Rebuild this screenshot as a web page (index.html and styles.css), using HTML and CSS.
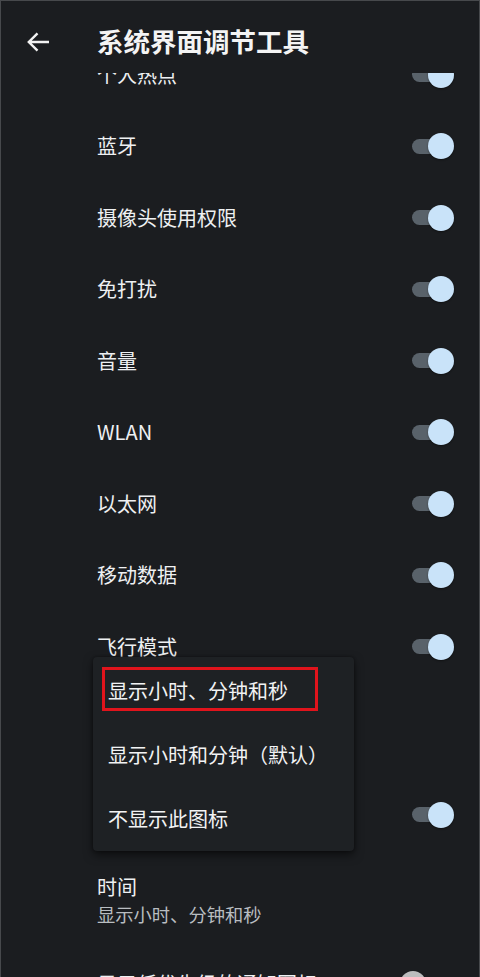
FILE: index.html
```html
<!DOCTYPE html>
<html lang="zh-CN">

<head>
    <meta charset="UTF-8">
    <meta name="viewport" content="width=device-width, initial-scale=1.0">
    <title>系统界面调节工具</title>
    <link rel="stylesheet" href="styles.css">
</head>

<body>

    <div class="screen">

        <div class="topbar">
            <svg class="back" width="24" height="24" viewBox="0 0 24 24">
                <path d="M23 12 H3 M11.5 3.3 L2.8 12 L11.5 20.7" fill="none" stroke="#f2f2f2" stroke-width="2.4" stroke-linecap="butt" stroke-linejoin="miter" />
            </svg>
            <div class="title">系统界面调节工具</div>
        </div>

        <div class="list">
            <div class="inner">

                <div class="row">
                    <span class="label">个人热点</span>
                    <span class="toggle on"><span class="track"></span><span class="thumb"></span></span>
                </div>
                <div class="row">
                    <span class="label">蓝牙</span>
                    <span class="toggle on"><span class="track"></span><span class="thumb"></span></span>
                </div>
                <div class="row">
                    <span class="label">摄像头使用权限</span>
                    <span class="toggle on"><span class="track"></span><span class="thumb"></span></span>
                </div>
                <div class="row">
                    <span class="label">免打扰</span>
                    <span class="toggle on"><span class="track"></span><span class="thumb"></span></span>
                </div>
                <div class="row">
                    <span class="label">音量</span>
                    <span class="toggle on"><span class="track"></span><span class="thumb"></span></span>
                </div>
                <div class="row">
                    <span class="label">WLAN</span>
                    <span class="toggle on"><span class="track"></span><span class="thumb"></span></span>
                </div>
                <div class="row">
                    <span class="label">以太网</span>
                    <span class="toggle on"><span class="track"></span><span class="thumb"></span></span>
                </div>
                <div class="row">
                    <span class="label">移动数据</span>
                    <span class="toggle on"><span class="track"></span><span class="thumb"></span></span>
                </div>
                <div class="row">
                    <span class="label">飞行模式</span>
                    <span class="toggle on"><span class="track"></span><span class="thumb"></span></span>
                </div>

                <div class="spacer"></div>

                <!-- label of this row sits under the popup -->
                <div class="row">
                    <span class="label"></span>
                    <span class="toggle on"><span class="track"></span><span class="thumb"></span></span>
                </div>

                <div class="row tall">
                    <div class="texts">
                        <div class="label">时间</div>
                        <div class="summary">显示小时、分钟和秒</div>
                    </div>
                </div>

                <div class="row">
                    <span class="label">显示低优先级的通知图标</span>
                    <span class="toggle off"><span class="track"></span><span class="thumb"></span></span>
                </div>

            </div>

            <!-- popup over the list -->
            <div class="menu">
                <div class="item">显示小时、分钟和秒<span class="mark"></span></div>
                <div class="item">显示小时和分钟（默认）</div>
                <div class="item">不显示此图标</div>
            </div>
        </div>

    </div>

</body>

</html>
```

FILE: styles.css
```css
html,
body {
    margin: 0;
    padding: 0;
    background-color: #1b1d20;
}

body {
    width: 480px;
    height: 977px;
    overflow: hidden;
    font-family: "Noto Sans CJK SC", "Noto Sans", sans-serif;
    color: #eef0f2;
}

.screen {
    box-sizing: border-box;
    height: 977px;
    border: 1px solid #47494c;
    border-bottom: 0;
    display: flex;
    flex-direction: column;
}

.topbar {
    box-sizing: border-box;
    height: 72px;
    padding-top: 9px;
    padding-left: 25px;
    display: flex;
    align-items: center;
    flex-shrink: 0;
}

.back {
    display: block;
}

.title {
    margin-left: 47px;
    font-size: 26.5px;
    font-weight: bold;
    color: #f4f4f4;
    line-height: 1;
}

.list {
    position: relative;
    flex: 1;
    overflow: hidden;
}

.inner {
    margin-top: -34.25px;
}

.row {
    box-sizing: border-box;
    height: 71.5px;
    padding-left: 96px;
    padding-right: 25px;
    display: flex;
    align-items: center;
    justify-content: space-between;
}

.label {
    font-size: 20px;
    line-height: 1;
    color: #eef0f2;
}

.spacer {
    height: 96.5px;
}

.row.tall {
    height: 98px;
}

.texts {
    display: flex;
    flex-direction: column;
    gap: 8px;
    margin-top: 2px;
}

.summary {
    font-size: 18.3px;
    line-height: 1;
    color: #b9bdc1;
}

.toggle {
    position: relative;
    width: 42px;
    height: 26px;
    flex-shrink: 0;
}

.track {
    position: absolute;
    left: 0;
    top: 5.5px;
    width: 34px;
    height: 15px;
    border-radius: 8px;
    background-color: #59626a;
}

.thumb {
    position: absolute;
    top: 0;
    left: 16px;
    width: 26px;
    height: 26px;
    border-radius: 50%;
    background-color: #c9e3f9;
    box-shadow: 0 1px 2px rgba(0, 0, 0, 0.4);
}

.toggle.off {
    margin-right: 12px;
}

.toggle.off .track {
    left: 8px;
    background-color: #55585b;
}

.toggle.off .thumb {
    left: 0;
    background-color: #bcbdbe;
}

.menu {
    position: absolute;
    left: 92px;
    top: 584px;
    width: 261px;
    padding: 1px 0;
    background-color: #1e2124;
    border-radius: 4px;
    box-shadow: 0 4px 10px rgba(0, 0, 0, 0.55), 0 0 3px rgba(0, 0, 0, 0.4);
}

.item {
    position: relative;
    height: 64px;
    padding-left: 15px;
    display: flex;
    align-items: center;
    font-size: 20px;
    color: #f2f3f4;
}

.mark {
    position: absolute;
    left: 9px;
    top: 9px;
    width: 210px;
    height: 38px;
    border: 3px solid #e0141c;
}
```
